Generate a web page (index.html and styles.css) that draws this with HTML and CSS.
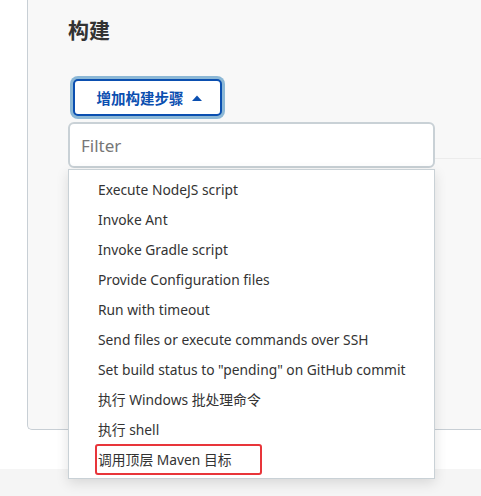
FILE: index.html
```html
<!DOCTYPE html>
<html>
<head>
  <meta charset="UTF-8" />
  <title>构建</title>
  <link rel="stylesheet" href="styles.css">
</head>
<body>
  <div class="page">
    <section class="build-section">
      <h2 class="section-title">构建</h2>
      <div class="add-step">
        <button class="add-step-btn">增加构建步骤<svg class="caret" width="10" height="6" viewBox="0 0 10 6"><path d="M0 6 L5 0.5 L10 6 Z" fill="currentColor"/></svg></button>
        <div class="step-dropdown">
          <input class="step-filter" type="text" placeholder="Filter" />
          <ul class="step-menu">
            <li>Execute NodeJS script</li>
            <li>Invoke Ant</li>
            <li>Invoke Gradle script</li>
            <li>Provide Configuration files</li>
            <li>Run with timeout</li>
            <li>Send files or execute commands over SSH</li>
            <li>Set build status to "pending" on GitHub commit</li>
            <li>执行 Windows 批处理命令</li>
            <li>执行 shell</li>
            <li class="marked">调用顶层 Maven 目标<span class="mark-box"></span></li>
          </ul>
        </div>
        <div class="row-divider"></div>
      </div>
    </section>
    <div class="bottom-bar"></div>
  </div>
</body>
</html>
```

FILE: styles.css
```css
body {
  margin: 0;
  background: #ffffff;
  color: #333333;
  font-family: "Noto Sans", "Noto Sans CJK SC", sans-serif;
}
.page {
  height: 496px;
  overflow: hidden;
}
.build-section {
  margin-left: 27px;
  height: 430px;
  box-sizing: border-box;
  background: #f8f8f8;
  border-left: 1px solid #c8cfd5;
  border-bottom: 1px solid #c8cfd5;
  border-bottom-left-radius: 5px;
  padding: 15px 0 0 40px;
}
.section-title {
  margin: 0;
  font-size: 21px;
  line-height: 30px;
  font-weight: 700;
  color: #333333;
}
.add-step {
  position: relative;
  margin-top: 34px;
}
.add-step-btn {
  margin-left: 5px;
  width: 149px;
  height: 37px;
  box-sizing: border-box;
  background: #ffffff;
  border: 2px solid #0b4fb0;
  border-radius: 5px;
  box-shadow: 0 0 0 3px #8cb8d6;
  color: #0b4fb0;
  font-family: "Noto Sans CJK SC", sans-serif;
  font-size: 14.5px;
  font-weight: 700;
  padding: 0 0 0 3px;
  cursor: pointer;
  display: flex;
  align-items: center;
  justify-content: center;
}
.caret {
  margin-left: 8px;
}
.step-dropdown {
  position: absolute;
  left: 0;
  top: 43px;
  width: 367px;
  z-index: 2;
}
.step-filter {
  display: block;
  width: 100%;
  height: 46px;
  box-sizing: border-box;
  border: 2px solid #c9d1d6;
  border-radius: 6px;
  padding: 0 11px;
  font-family: "Noto Sans", sans-serif;
  font-size: 17px;
  color: #333333;
  background: #ffffff;
  outline: none;
}
.step-filter::placeholder {
  color: #777777;
}
.step-menu {
  list-style: none;
  margin: 1px 0 0 0;
  padding: 5px 0 3px 0;
  background: #ffffff;
  border: 1px solid #c9d1d6;
  box-shadow: 0 4px 12px rgba(0, 0, 0, 0.12);
}
.step-menu li {
  position: relative;
  height: 30px;
  line-height: 30px;
  padding-left: 29px;
  font-size: 13.8px;
  color: #333333;
  white-space: nowrap;
}
.mark-box {
  position: absolute;
  left: 26px;
  top: -1px;
  width: 167px;
  height: 31px;
  box-sizing: border-box;
  border: 2px solid #e8353a;
  border-radius: 3px;
}
.row-divider {
  height: 1px;
  background: #ececec;
  position: absolute;
  left: 0;
  right: 0;
  top: 79px;
}
.bottom-bar {
  margin-top: 39px;
  height: 27px;
  background: #f5f5f5;
}
```
